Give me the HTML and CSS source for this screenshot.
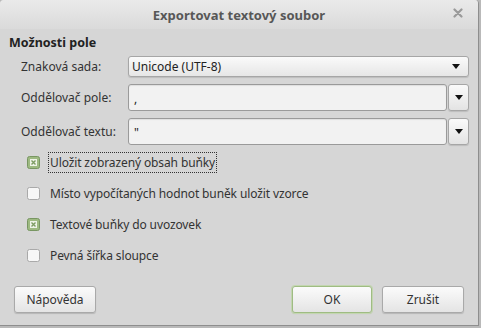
FILE: index.html
```html
<!DOCTYPE html>
<html lang="cs">

<head>
    <meta charset="UTF-8">
    <meta name="viewport" content="width=device-width, initial-scale=1.0">
    <title>Exportovat textový soubor</title>
    <link rel="stylesheet" href="styles.css">
</head>

<body>

    <div class="dialog">
        <div class="titlebar">
            <span class="title">Exportovat textový soubor</span>
            <svg class="close" width="10" height="10" viewBox="0 0 10 10">
                <path d="M1.5 1.5 L8.5 8.5 M8.5 1.5 L1.5 8.5" stroke="#9a9a9a" stroke-width="2.2" stroke-linecap="round" />
            </svg>
        </div>

        <div class="content">
            <div class="section_title">Možnosti pole</div>

            <div class="fields">
                <label class="field_label">Znaková sada:</label>
                <div class="combo">
                    <span class="combo_value">Unicode (UTF-8)</span>
                    <span class="arrow"></span>
                </div>

                <label class="field_label">Oddělovač pole:</label>
                <div class="entry_combo">
                    <div class="entry">,</div>
                    <div class="entry_button"><span class="arrow"></span></div>
                </div>

                <label class="field_label">Oddělovač textu:</label>
                <div class="entry_combo">
                    <div class="entry">"</div>
                    <div class="entry_button"><span class="arrow"></span></div>
                </div>
            </div>

            <div class="checks">
                <div class="check_row">
                    <svg class="checkbox" width="13" height="13" viewBox="0 0 13 13">
                        <rect x="0.5" y="0.5" width="12" height="12" rx="2" fill="#9db981" stroke="#789662" />
                        <rect x="3" y="3" width="7" height="7" fill="#eef3e8" />
                        <path d="M4.5 4.5 L8.5 8.5 M8.5 4.5 L4.5 8.5" stroke="#7d9c63" stroke-width="1.4" />
                    </svg>
                    <span class="check_label focused">Uložit zobrazený obsah buňky</span>
                </div>
                <div class="check_row">
                    <svg class="checkbox" width="13" height="13" viewBox="0 0 13 13">
                        <rect x="0.5" y="0.5" width="12" height="12" rx="2" fill="#f7f7f7" stroke="#a9a9a9" />
                    </svg>
                    <span class="check_label">Místo vypočítaných hodnot buněk uložit vzorce</span>
                </div>
                <div class="check_row">
                    <svg class="checkbox" width="13" height="13" viewBox="0 0 13 13">
                        <rect x="0.5" y="0.5" width="12" height="12" rx="2" fill="#9db981" stroke="#789662" />
                        <rect x="3" y="3" width="7" height="7" fill="#eef3e8" />
                        <path d="M4.5 4.5 L8.5 8.5 M8.5 4.5 L4.5 8.5" stroke="#7d9c63" stroke-width="1.4" />
                    </svg>
                    <span class="check_label">Textové buňky do uvozovek</span>
                </div>
                <div class="check_row">
                    <svg class="checkbox" width="13" height="13" viewBox="0 0 13 13">
                        <rect x="0.5" y="0.5" width="12" height="12" rx="2" fill="#f7f7f7" stroke="#a9a9a9" />
                    </svg>
                    <span class="check_label">Pevná šířka sloupce</span>
                </div>
            </div>
        </div>

        <div class="footer">
            <button class="btn btn_help">Nápověda</button>
            <div class="footer_right">
                <button class="btn btn_default">OK</button>
                <button class="btn">Zrušit</button>
            </div>
        </div>
    </div>

</body>

</html>
```

FILE: styles.css
```css
body {
    margin: 0;
    background: #b9b9b9;
    font-family: "Noto Sans", "DejaVu Sans", sans-serif;
    font-size: 12px;
    color: #333;
}

.dialog {
    width: 478px;
    height: 325px;
    display: flex;
    flex-direction: column;
    background: #d6d6d6;
    border-right: 1px solid #8e8e8e;
    border-bottom: 1px solid #8e8e8e;
    border-radius: 4px 4px 0 0;
    overflow: hidden;
}

.titlebar {
    position: relative;
    height: 29px;
    display: flex;
    align-items: center;
    justify-content: center;
    background: linear-gradient(#eaeaea, #dadada);
}

.title {
    font-weight: bold;
    font-size: 13px;
    color: #575757;
}

.close {
    position: absolute;
    right: 15px;
    top: 8px;
}

.content {
    padding: 5px 9px 0 9px;
    flex: 1;
}

.section_title {
    font-weight: bold;
    font-size: 12.5px;
    color: #222;
    height: 18px;
    line-height: 18px;
}

.fields {
    margin-top: 4px;
    display: grid;
    grid-template-columns: 107px 341px;
    row-gap: 7px;
    padding-left: 12px;
    align-items: center;
}

.field_label {
    color: #333;
}

.combo {
    height: 19px;
    display: flex;
    align-items: center;
    justify-content: space-between;
    padding: 0 8px 0 3px;
    border: 1px solid #a6a6a6;
    border-radius: 3px;
    background: linear-gradient(#fafafa, #e6e6e6);
    box-shadow: 0 1px 1px rgba(0, 0, 0, 0.12);
}

.combo_value {
    color: #222;
}

.arrow {
    width: 0;
    height: 0;
    border-left: 4px solid transparent;
    border-right: 4px solid transparent;
    border-top: 5px solid #111;
}

.entry_combo {
    display: flex;
    gap: 1px;
    height: 27px;
}

.entry {
    flex: 1;
    border: 1px solid #9a9a9a;
    border-radius: 3px;
    background: #f2f2f2;
    padding: 8px 0 0 5px;
    box-sizing: border-box;
    line-height: 12px;
    color: #222;
    box-shadow: inset 0 1px 1px rgba(0, 0, 0, 0.08);
}

.entry_button {
    width: 19px;
    display: flex;
    align-items: center;
    justify-content: center;
    border: 1px solid #a6a6a6;
    border-radius: 3px;
    background: linear-gradient(#fafafa, #e3e3e3);
    box-shadow: 0 1px 1px rgba(0, 0, 0, 0.12);
}

.checks {
    margin-top: 8px;
    padding-left: 18px;
    display: flex;
    flex-direction: column;
    gap: 13px;
}

.check_row {
    display: flex;
    align-items: center;
    gap: 9px;
    height: 18px;
}

.checkbox {
    flex: none;
}

.check_label {
    color: #333;
    padding: 1px 1px;
    letter-spacing: -0.12px;
}

.check_label.focused {
    outline: 1px dotted #333;
}

.footer {
    display: flex;
    justify-content: space-between;
    padding: 0 14px 12px 14px;
}

.footer_right {
    display: flex;
    gap: 10px;
}

.btn {
    height: 27px;
    width: 82px;
    font-family: inherit;
    font-size: 12px;
    color: #333;
    border: 1px solid #a9a9a9;
    border-radius: 3px;
    background: linear-gradient(#fbfbfb, #e4e4e4);
    box-shadow: 0 1px 1px rgba(0, 0, 0, 0.15);
}

.btn_default {
    width: 80px;
    border-color: #9fbc83;
    box-shadow: 0 0 0 1px #c3d6b0, 0 1px 1px rgba(0, 0, 0, 0.15);
}
```
